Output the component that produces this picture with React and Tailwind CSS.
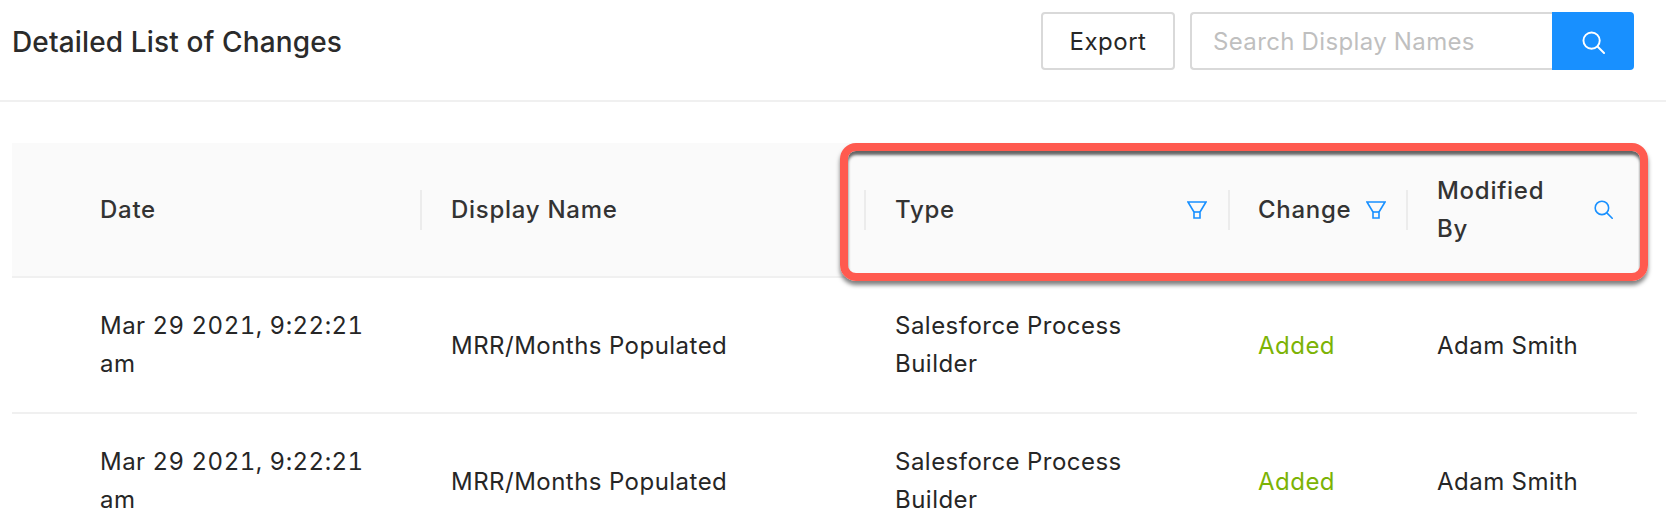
import React from "react";

const SearchIcon = ({ size, color }) => (
  <svg width={size} height={size} viewBox="0 0 24 24" fill="none" stroke={color} strokeWidth="2" strokeLinecap="round" className="shrink-0">
    <circle cx="10" cy="10" r="8.5" />
    <path d="M16.2 16.2 23 23" />
  </svg>
);

const FilterIcon = () => (
  <svg width="20" height="18" viewBox="0 0 20 18" fill="none" stroke="#1890ff" strokeWidth="1.6" className="shrink-0">
    <path d="M1 1h18l-6 10v6H7V11z" />
    <path d="M7 11h6" />
  </svg>
);

const Separator = () => <div className="h-10 w-[2px] shrink-0 bg-[#ececec]" />;

const HeaderCell = ({ label, icon, iconGap, pad = "pl-[29px]", separator = true }) => (
  <div className={`flex items-center ${pad}`}>
    <div className="flex-1 min-w-0 font-medium tracking-[0.03em] text-[#333333]">{label}</div>
    {icon}
    {iconGap && <div className={iconGap} />}
    {separator && <Separator />}
  </div>
);

const rows = [1, 2];

export default function App() {
  return (
    <div className="relative h-[532px] w-[1666px] overflow-hidden bg-white font-['Inter',sans-serif] text-[24px] leading-[38px] text-[#262626] tracking-[0.02em] tabular-nums">
      <div className="flex h-[102px] items-start justify-between border-b-2 border-[#f0f0f0] pl-3 pr-8 pt-3">
        <h1 className="pt-[12px] text-[28px] font-medium leading-[36px] tracking-[0.005em] text-[#2b2b2b]">Detailed List of Changes</h1>
        <div className="flex">
          <button className="mr-[15px] h-[58px] w-[134px] rounded border-2 border-[#d9d9d9] bg-white pt-[2px]">Export</button>
          <div className="flex h-[58px] w-[444px]">
            <div className="flex-1 rounded-l border-2 border-r-0 border-[#d9d9d9] pl-[21px] pt-[2px] leading-[52px] tracking-[0.015em] text-[#bfbfbf]">
              Search Display Names
            </div>
            <button className="flex w-[82px] items-center justify-center rounded-r bg-[#1890ff] pt-[3px]">
              <SearchIcon size={23} color="white" />
            </button>
          </div>
        </div>
      </div>

      <div className="ml-3 mt-[41px] w-[1625px]">
        <div className="grid h-[135px] grid-cols-[410px_444px_364px_178px_229px] border-b-2 border-[#f0f0f0] bg-[#fafafa]">
          <HeaderCell pad="pl-[88px]" label="Date" />
          <HeaderCell label="Display Name" />
          <HeaderCell label="Type" icon={<FilterIcon />} iconGap="w-[21px]" />
          <HeaderCell pad="pl-[28px]" label="Change" icon={<FilterIcon />} iconGap="w-[20px]" />
          <HeaderCell
            label={<span className="block w-[130px]">Modified By</span>}
            icon={<SearchIcon size={19} color="#1890ff" />}
            iconGap="w-[24px]"
            separator={false}
          />
        </div>

        {rows.map((row) => (
          <div key={row} className="grid h-[136px] grid-cols-[410px_444px_364px_178px_229px] items-center border-b-2 border-[#f0f0f0]">
            <div className="pl-[88px] pr-[30px]">Mar 29 2021, 9:22:21 am</div>
            <div className="pl-[29px] pt-[2px]">MRR/Months Populated</div>
            <div className="pl-[29px] pr-8">Salesforce Process Builder</div>
            <div className="pl-[28px] pt-[2px] text-[#7cb305]">Added</div>
            <div className="pl-[29px] pt-[2px]">Adam Smith</div>
          </div>
        ))}
      </div>

      {/* annotation drawn over the table */}
      <div className="absolute left-[840px] top-[143px] h-[138px] w-[808px] rounded-[16px] border-[8px] border-[#ff5a4f] shadow-[0_4px_4px_rgba(0,0,0,0.5),inset_0_4px_3px_rgba(0,0,0,0.6)]" />
    </div>
  );
}
